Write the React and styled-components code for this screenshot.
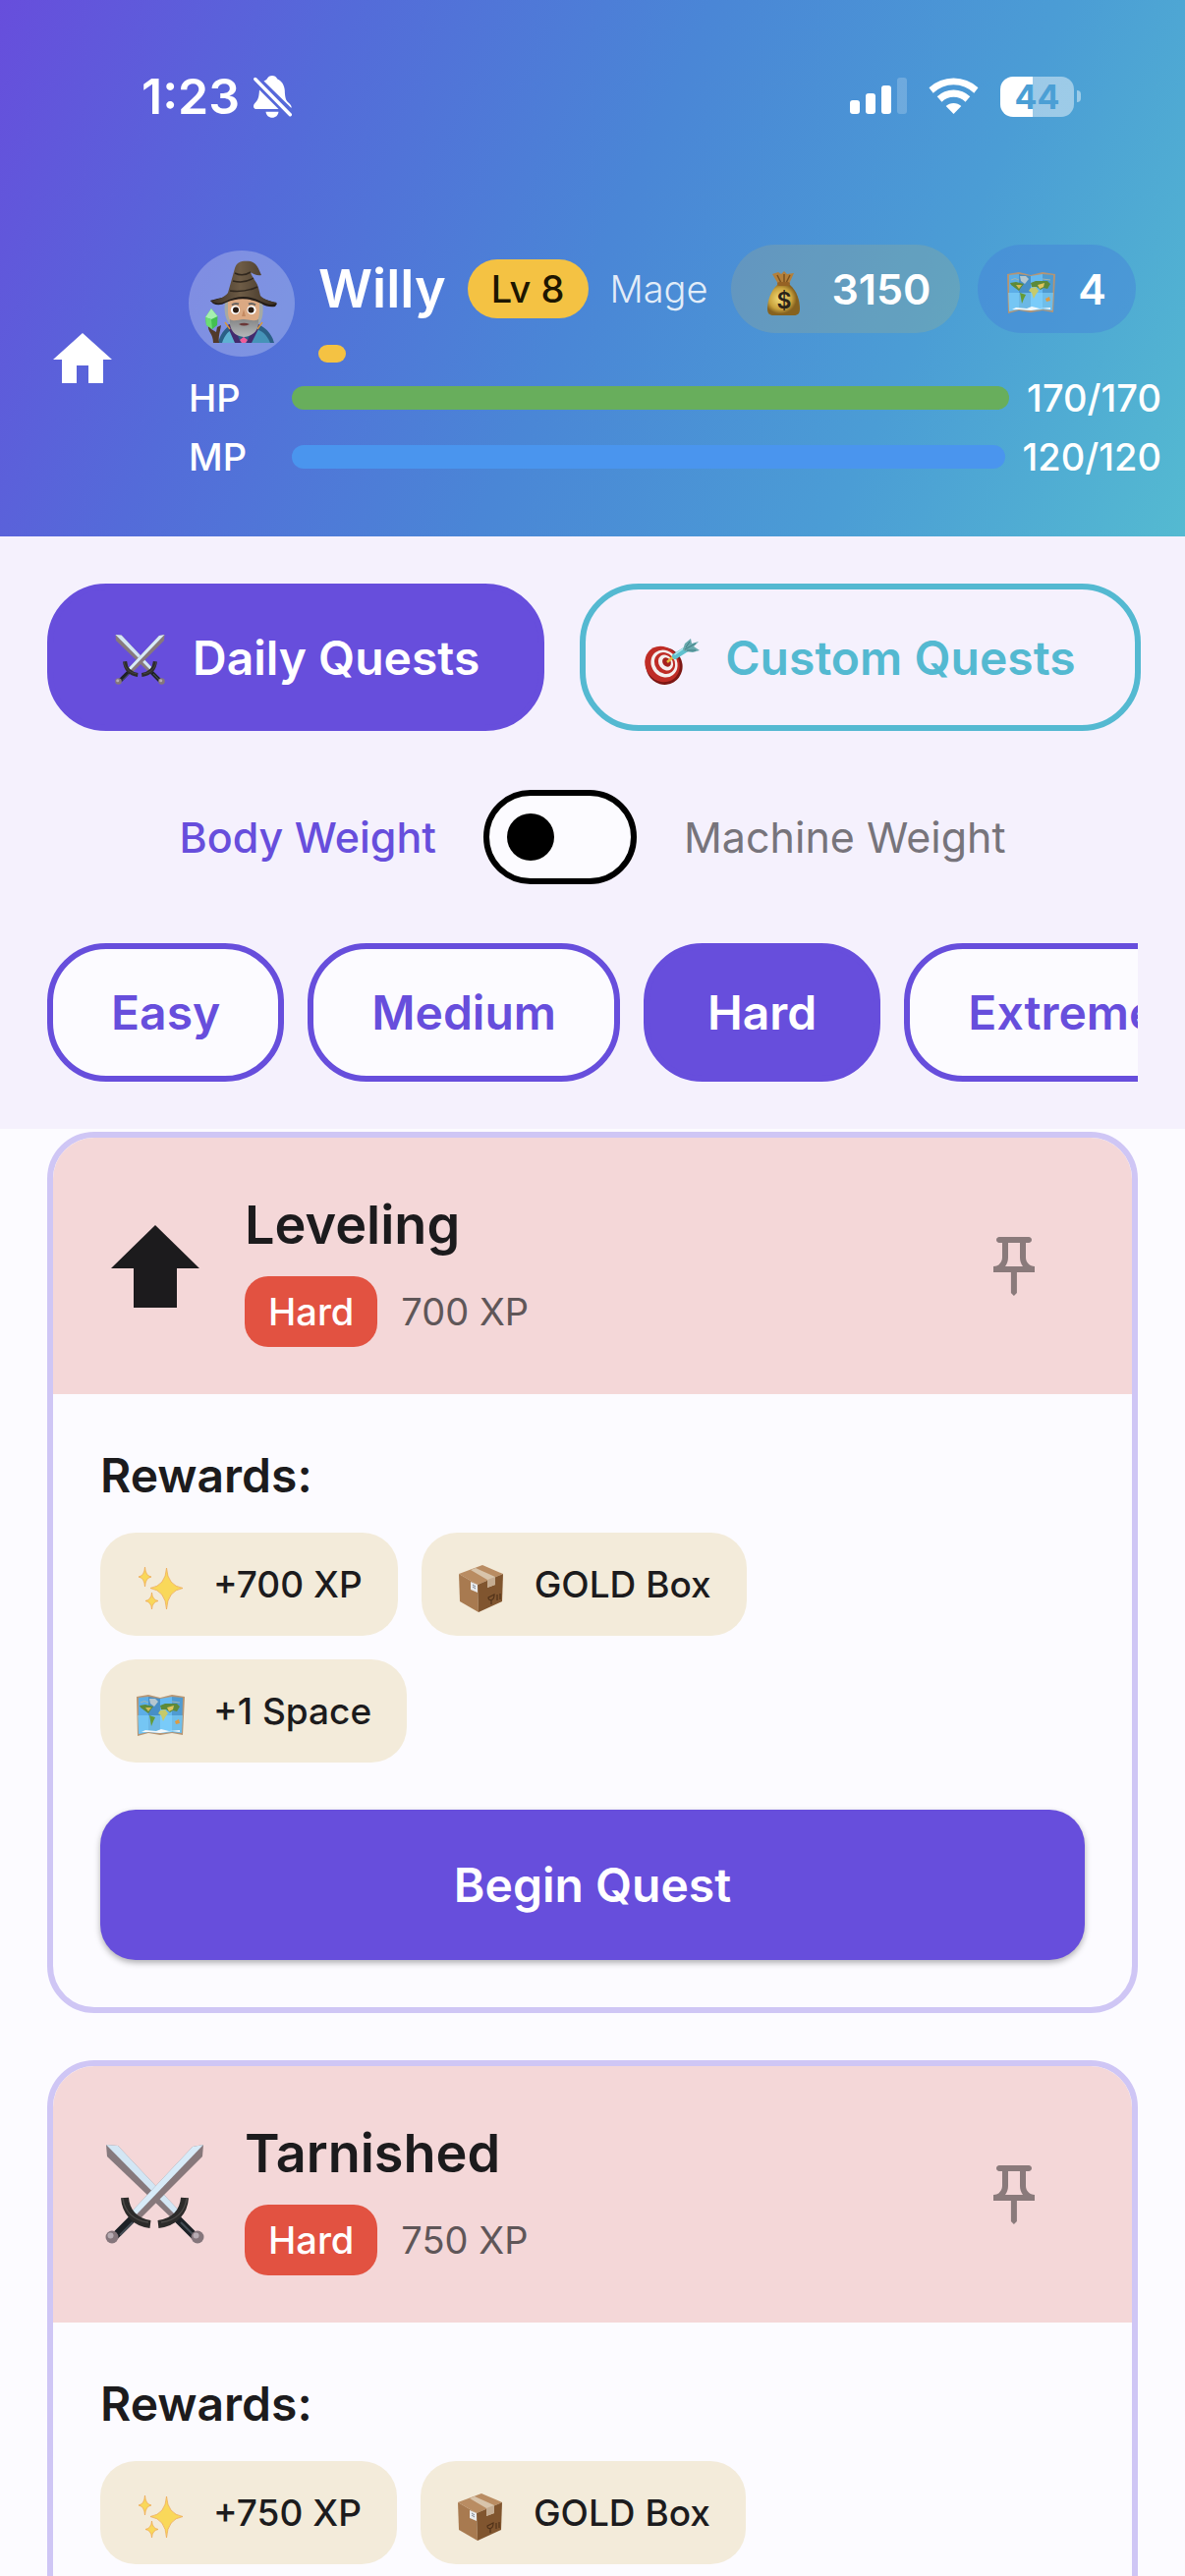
import React, {useState} from 'react';
import styled, {createGlobalStyle, css} from 'styled-components';

const primary = '#674edc';
const secondary = '#54b9d1';
const gold = '#f4c243';
const surface = '#fcfbff';
const textColor = '#1c1b1d';

const textSm = 38;
const textMd = 43;
const textLg = 48;
const textXl = 54;

const GlobalStyle = createGlobalStyle`
  * {
    box-sizing: border-box;
  }

  body {
    margin: 0;
    font-family: Inter, "Liberation Sans", sans-serif;
    color: ${textColor};
    background: ${surface};
  }

  button {
    font-family: inherit;
    cursor: pointer;
  }

  svg {
    display: block;
    flex: none;
  }
`;

const Screen = styled.div`
  display: flex;
  flex-direction: column;
  height: 100vh;
  overflow: hidden;
`;

/* Header */

const Header = styled.header`
  flex: none;
  padding-bottom: 57px;
  color: #fff;
  background: linear-gradient(114.4deg, #674edc 0%, #546bd9 25%, #4a86d6 50%, #4b9dd5 75%, #54bad1 100%);
`;

const StatusBar = styled.div`
  display: flex;
  align-items: center;
  height: 196px;
  padding: 0 106px 0 144px;
`;

const Clock = styled.time`
  font-size: 50px;
  line-height: 60px;
  font-weight: 600;
  margin-right: 14px;
`;

const StatusIcons = styled.div`
  display: flex;
  align-items: center;
  gap: 22px;
  margin-left: auto;
`;

const Battery = styled.div`
  display: flex;
  align-items: center;
  gap: 3px;

  &::after {
    content: '';
    width: 4px;
    height: 12px;
    border-radius: 0 6px 6px 0;
    background: rgba(255, 255, 255, 0.45);
  }
`;

const BatteryLevel = styled.div`
  width: 75px;
  border-radius: 13px;
  font-size: 34px;
  line-height: 41px;
  font-weight: 700;
  text-align: center;
  color: #4b9fd5;
  background: linear-gradient(90deg, #fff 44%, rgba(255, 255, 255, 0.45) 44%);
`;

const HeaderBody = styled.div`
  display: flex;
  align-items: center;
  gap: 36px;
  padding: 53px 24px 0 12px;
`;

const IconButton = styled.button`
  display: flex;
  align-items: center;
  justify-content: center;
  flex: none;
  width: 144px;
  height: 144px;
  padding: 0;
  border: 0;
  color: ${props => props.$color};
  background: none;
`;

const Stats = styled.div`
  display: flex;
  flex-direction: column;
  gap: 12px;
  flex: 1;
  min-width: 0;
`;

const Profile = styled.div`
  display: flex;
  align-items: center;
  gap: 24px;
`;

const Avatar = styled.div`
  display: flex;
  justify-content: center;
  flex: none;
  width: 108px;
  height: 108px;
  padding-top: 10px;
  border-radius: 50%;
  background: rgba(255, 255, 255, 0.25);
`;

const ProfileInfo = styled.div`
  flex: 1;
`;

const NameRow = styled.div`
  display: flex;
  align-items: center;
  gap: 22px;
  margin-bottom: 12px;
  padding-right: 26px;
  white-space: nowrap;
`;

const Name = styled.h1`
  margin: 0;
  font-size: ${textXl}px;
  line-height: 72px;
  font-weight: 600;
`;

const LevelBadge = styled.span`
  padding: 0 24px;
  border-radius: 30px;
  font-size: ${textSm}px;
  line-height: 60px;
  font-weight: 500;
  color: #1d1600;
  background: ${gold};
`;

const ClassName = styled.span`
  font-size: ${textSm}px;
  font-weight: 300;
  color: rgba(255, 255, 255, 0.85);
`;

const Currencies = styled.div`
  display: flex;
  gap: 18px;
  margin-left: auto;
`;

const IconSlot = styled.span`
  display: flex;
  align-items: center;
  justify-content: center;
  flex: none;
  width: ${props => props.$size}px;
  height: ${props => props.$size}px;
  padding-top: ${props => props.$drop || 0}px;
`;

const Currency = styled.span`
  display: flex;
  align-items: center;
  gap: 24px;
  height: 90px;
  padding: 0 30px;
  border-radius: 45px;
  font-size: ${textMd}px;
  font-weight: 600;
  background: ${props => props.$background};
`;

const XpBar = styled.div`
  height: 18px;
`;

const BarFill = styled.div`
  height: 100%;
  border-radius: 12px;
  background: ${props => props.$color};
`;

const StatRow = styled.div`
  display: flex;
  align-items: center;
  gap: 18px;
  font-size: ${textSm}px;
  line-height: 48px;
  font-weight: 500;
`;

const StatLabel = styled.span`
  width: 87px;
`;

const StatTrack = styled.div`
  flex: 1;
  height: 24px;
`;

/* Filters */

const Filters = styled.section`
  display: flex;
  flex-direction: column;
  gap: 60px;
  flex: none;
  padding: 48px;
  background: #f5f1fd;
`;

const TabRow = styled.div`
  display: flex;
  gap: 36px;
`;

const pill = css`
  display: flex;
  align-items: center;
  flex: none;
  border: 6px solid ${props => props.$color};
  border-radius: 60px;
  font-size: ${textLg}px;
  line-height: 57px;
  font-weight: 600;
  white-space: nowrap;
  color: ${props => (props.$active ? '#fff' : props.$color)};
`;

const Tab = styled.button`
  ${pill}
  gap: 26px;
  padding: 36px 60px;
  background: ${props => (props.$active ? props.$color : 'transparent')};
`;

const TabIcon = styled(IconSlot)`
  height: 66px;
`;

const Chip = styled.button`
  ${pill}
  padding: 36px 59px;
  background: ${props => (props.$active ? props.$color : surface)};
`;

const ChipRow = styled.div`
  display: flex;
  gap: 24px;
  overflow: hidden;
`;

const ModeRow = styled.div`
  display: flex;
  align-items: center;
  justify-content: center;
  gap: 48px;
`;

const ModeLabel = styled.label`
  font-size: ${textMd}px;
  line-height: 60px;
  font-weight: ${props => (props.$active ? 500 : 400)};
  color: ${props => (props.$active ? primary : '#77747b')};
`;

const Switch = styled.input`
  appearance: none;
  display: flex;
  align-items: center;
  justify-content: ${props => (props.checked ? 'flex-end' : 'flex-start')};
  width: 156px;
  height: 96px;
  margin: 0;
  padding: 0 18px;
  border: 6px solid #000;
  border-radius: 48px;
  background: ${surface};
  cursor: pointer;

  &::before {
    content: '';
    width: 48px;
    height: 48px;
    border-radius: 50%;
    background: #000;
  }
`;

/* Quests */

const QuestList = styled.main`
  display: flex;
  flex-direction: column;
  gap: 48px;
  flex: 1;
  min-height: 0;
  padding: 3px 48px 0;
`;

const Card = styled.article`
  flex: none;
  border: 6px solid #cfc6f5;
  border-radius: 48px;
  overflow: hidden;
`;

const CardHeader = styled.div`
  display: flex;
  align-items: center;
  gap: 36px;
  padding: 48px;
  background: #f4d7d8;
`;

const CardInfo = styled.div`
  flex: 1;
`;

const CardTitle = styled.h2`
  margin: 0 0 12px;
  font-size: ${textXl}px;
  line-height: 81px;
  font-weight: 600;
`;

const CardMeta = styled.div`
  display: flex;
  align-items: center;
  gap: 24px;
  font-size: ${textSm}px;
  line-height: 72px;
  color: #5f5658;
`;

const Difficulty = styled.span`
  padding: 0 24px;
  border-radius: 24px;
  font-weight: 500;
  color: #fff;
  background: #e25241;
`;

const CardBody = styled.div`
  padding: 48px;
`;

const RewardsTitle = styled.h3`
  margin: 0 0 24px;
  font-size: ${textLg}px;
  line-height: 69px;
  font-weight: 600;
`;

const Rewards = styled.ul`
  display: flex;
  flex-wrap: wrap;
  gap: 24px;
  max-width: 720px;
  margin: 0 0 48px;
  padding: 0;
  list-style: none;
`;

const Reward = styled.li`
  display: flex;
  align-items: center;
  gap: 29px;
  height: 105px;
  padding: 0 36px;
  border-radius: 36px;
  font-size: 37px;
  font-weight: 500;
  background: #f3ebda;
`;

const BeginButton = styled.button`
  width: 100%;
  padding: 48px;
  border: 0;
  border-radius: 36px;
  font-size: ${textLg}px;
  line-height: 57px;
  font-weight: 600;
  color: #fff;
  background: ${primary};
  box-shadow: 0 3px 6px rgba(0, 0, 0, 0.3);
`;

/* Icons */

const BellOffIcon = () => (
  <svg width="39" height="43" viewBox="0 0 39 43" fill="#fff">
    <path d="M10.5 5.5C12 4.6 13 4.2 13.6 3.4C14.8 1.2 16.7 0 19 0S23.200 1.200 24.400 3.400C28.500 5 31.500 9.500 31.800 15C32 21 32.500 24.500 35 27C37.500 29.200 39 30.500 38.500 33Z" />
    <path d="M6 14.500L25.500 34H2.500C-.6 34-.6 30 1.400 28C4.800 24.800 5.500 22 6 14.500Z" />
    <path d="M12.500 36.800H25.500C25 40.500 22.500 42.800 19 42.800S13 40.500 12.500 36.800Z" />
    <path d="M1.800 3.500L37.300 39.800" stroke="#fff" strokeWidth="3.400" strokeLinecap="round" />
  </svg>
);

const SignalIcon = () => (
  <svg width="58" height="38" viewBox="0 0 58 38" fill="#fff">
    <rect x="0" y="23" width="10" height="14" rx="3" />
    <rect x="16" y="16" width="10" height="21" rx="3" />
    <rect x="32" y="8" width="10" height="29" rx="3" />
    <rect x="48" y="0" width="10" height="37" rx="3" opacity="0.2" />
  </svg>
);

const WifiIcon = () => (
  <svg width="51" height="38" viewBox="0 0 51 38" fill="#fff">
    <path d="M0.500 10.300A37 37 0 0 1 50.500 10.300L46.300 15.700A29.800 29.800 0 0 0 4.700 15.700Z" />
    <path d="M8.700 19.300A24.400 24.400 0 0 1 42.300 19.300L37.500 24.700A17 17 0 0 0 13.500 24.700Z" />
    <path d="M17.700 29A11.300 11.300 0 0 1 33.300 29L25.500 37Z" />
  </svg>
);

const HomeIcon = () => (
  <svg width="72" height="72" viewBox="0 0 24 24" fill="currentColor">
    <path d="M10 19v-6h4v6h5v-8h3L12 2 2 11h3v8z" />
  </svg>
);

const PinIcon = () => (
  <svg width="72" height="72" viewBox="0 0 24 24" fill="currentColor">
    <path d="M14 4v5c0 1.120.37 2.160 1 3H9c.65-.86 1-1.900 1-3V4h4m3-2H7c-.55 0-1 .45-1 1s.45 1 1 1h1v5c0 1.660-1.340 3-3 3v2h5.970v7l1 1 1-1v-7H19v-2c-1.660 0-3-1.340-3-3V4h1c.55 0 1-.45 1-1s-.45-1-1-1z" />
  </svg>
);

const ArrowUpIcon = () => (
  <svg width="90" height="84" viewBox="0 0 90 84" fill={textColor}>
    <path d="M45 0L90 44H67V84H23V44H0Z" />
  </svg>
);

const WizardIcon = () => (
  <svg width="74" height="84" viewBox="0 0 74 84">
    <defs>
      <linearGradient id="hat" x1="0" x2="1">
        <stop offset="0" stopColor="#3b3025" />
        <stop offset="0.45" stopColor="#6e5c46" />
        <stop offset="1" stopColor="#382d23" />
      </linearGradient>
      <linearGradient id="beard" x1="0" x2="0" y1="0" y2="1">
        <stop offset="0" stopColor="#858788" />
        <stop offset="1" stopColor="#b4b7b8" />
      </linearGradient>
    </defs>
    <path d="M13 84C16 72 22 67 30 64H50C60 67 67 73 70 84Z" fill="#2b5f86" />
    <path d="M17 84C20 75 24 71 30 70L34 84Z" fill="#5fb1d2" />
    <path d="M66 84C62 75 58 71 49 70L45 84Z" fill="#4593b8" />
    <path d="M22 66L30 84H36L28 64ZM56 66L47 84H42L50 64Z" fill="#432a6d" />
    <path d="M20 63L25 70M58 63L53 70" stroke="#d6993b" strokeWidth="1.500" />
    <path d="M21 38C18 50 20 60 25 65H54C59 60 60 50 57 38Z" fill="#a5a9a4" />
    <path d="M23 38V54C24 64 31 70 39 70S54 64 55 54V38Z" fill="#dba983" />
    <path d="M25 60C30 63 33 60 39 60S48 63 54 60C55 69 51 77 39 78C28 77 24 69 25 60Z" fill="url(#beard)" />
    <path d="M34 65Q39 62.500 45 65Q39 68 34 65Z" fill="#6a3838" />
    <path d="M27 45.500Q30 43 34 44.500M44 44.500Q48 43 51 45.500" stroke="#686462" strokeWidth="2" fill="none" />
    <circle cx="30.500" cy="50.500" r="4.600" fill="#fff" />
    <circle cx="47" cy="50.500" r="4.600" fill="#fff" />
    <circle cx="31" cy="50.500" r="3" fill="#2c1c12" />
    <circle cx="46.500" cy="50.500" r="3" fill="#2c1c12" />
    <path d="M39 50L37 57H41Z" fill="#c48a62" />
    <path d="M5 41Q38 30 73 44L71 47Q63 48 57 44Q39 35 21 43Q14 47 8 44Z" fill="#231c17" />
    <path d="M5 41C14 40 20 37 23 33L30 8C32 1 38 0 46 1C53 3 54 9 57 15C53 16 49 14 46 12C48 19 53 22 54 28L56 36C60 40 67 42 73 43C68 47 62 44 57 42Q39 32 20 42Q12 46 5 41Z" fill="url(#hat)" />
    <path d="M30 13Q38 17 46 12M28 21Q40 24 49 18M25 31Q40 33 53 27" stroke="#30271e" strokeWidth="1.500" fill="none" />
    <path d="M3 66C2 73 8 74 8 84H14C13 77 15 73 16 66L12 68L11 73L6 70Z" fill="#513a2b" />
    <path d="M6 49L12.500 57L12 66L7 70L1 66L0 58Z" fill="#43bf51" />
    <path d="M6 49L12.500 57L6 60L0 58Z" fill="#a5efb0" />
    <path d="M6 60L7 70L1 66L0 58Z" fill="#6bdc74" />
    <path d="M39 78L43 81L41 84H37L35 81Z" fill="#ef5c9c" />
  </svg>
);

const MoneyBagIcon = () => (
  <svg width="34" height="45" viewBox="0 0 34 45">
    <defs>
      <radialGradient id="bag" cx="0.4" cy="0.45">
        <stop offset="0" stopColor="#f5df7c" />
        <stop offset="0.7" stopColor="#c9a23c" />
        <stop offset="1" stopColor="#86621f" />
      </radialGradient>
    </defs>
    <path d="M11 13L5 3L11 1L14 3L17 0L20 3L27 2L22 13Z" fill="#b5803a" />
    <path d="M10 4L14 12M17 3V12M23 4L19 12" stroke="#79501e" strokeWidth="1.500" />
    <path d="M10 14H23C30 20 33 30 33 38C33 43 31 45 27 45H6C2 45 0 43 0 38C0 30 4 19 10 14Z" fill="url(#bag)" />
    <rect x="10" y="11" width="13" height="4" rx="2" fill="#966224" />
    <text x="17" y="38" textAnchor="middle" fontSize="23" fontWeight="600" fill="#29231a">$</text>
  </svg>
);

const MapIcon = () => (
  <svg width="49" height="42" viewBox="0 0 49 42">
    <path d="M0 2L12 0L24 3L36 0L49 2L47 41L36 39L24 41L12 39L1 42Z" fill="#b69573" />
    <path d="M2 3L12 2V38L2 40Z" fill="#5caee7" />
    <path d="M12 2L24 4V39L12 38Z" fill="#478fc6" />
    <path d="M24 4L36 2V38L24 39Z" fill="#65b9f1" />
    <path d="M36 2L47 3L46 39L36 38Z" fill="#4f9bd1" />
    <path d="M1 21H47L46 39L36 38L24 39L12 38L2 40Z" fill="#8bdbff" opacity="0.55" />
    <path d="M13 4L19 4L22 7L18 12L14 9Z" fill="#b4c7cf" />
    <path d="M3 11L9 10L17 12L14 16L12 19L8 16L4 13Z" fill="#5d8a3a" />
    <path d="M9 13L15 13L12 17Z" fill="#d3bb55" />
    <path d="M13 21L19 23L17 27L15 32L14 26Z" fill="#659b35" />
    <path d="M24 11L29 9L41 9L44 12L41 17L37 16L34 18L30 15L25 15Z" fill="#5d8a3a" />
    <path d="M24 16L29 15L32 19L29 23L27 27L25 21L22 19Z" fill="#c5ca6b" />
    <path d="M31 13L38 11L37 15L33 17Z" fill="#e1c55e" />
    <path d="M39 27L43 25L44 29L40 30Z" fill="#dc9b42" />
    <path d="M5 38L9 36L20 37L25 35L33 37L44 36L44 38L36 37L24 39L12 38Z" fill="#f1f7fa" />
    <path d="M4 8Q8 5 12 8M36 7L44 8" stroke="#a3b5b0" fill="none" />
  </svg>
);

const SwordsIcon = ({size}) => (
  <svg width={size} height={size} viewBox="0 0 101 101">
    <path d="M1 0L13 1L76 68L69 76L2 12Z" fill="#86797d" />
    <path d="M1 0L13 1L76 68L72 72Z" fill="#d3e6f4" />
    <path d="M100 0L89 2L27 68L35 76L99 12Z" fill="#87787b" />
    <path d="M100 0L89 2L27 68L31 72Z" fill="#d8ebf8" />
    <path d="M27 76L10 93M74 76L91 93" stroke="#1d2126" strokeWidth="8" />
    <path d="M28 79L15 92M77 79L90 92" stroke="#454d55" strokeWidth="2" />
    <path d="M20 54C21 68 30 79 46 81M81 54C80 68 71 79 54 81" stroke="#2c2b2a" strokeWidth="8" fill="none" />
    <path d="M18 55C20 67 28 77 44 79M83 55C81 67 73 77 57 79" stroke="#4c4a48" strokeWidth="1.500" fill="none" />
    <circle cx="7" cy="94" r="6.500" fill="#85767c" />
    <circle cx="94" cy="94" r="6.500" fill="#85767c" />
    <circle cx="5.500" cy="92.500" r="3" fill="#b8adb4" />
    <circle cx="92.500" cy="92.500" r="3" fill="#b8adb4" />
  </svg>
);

const TargetIcon = () => (
  <svg width="56" height="47" viewBox="0 0 56 47">
    <ellipse cx="20" cy="28" rx="18.500" ry="19" fill="#7c1714" transform="rotate(-30 20 28)" />
    <ellipse cx="18" cy="26" rx="17" ry="19" fill="#bf2c26" transform="rotate(-38 18 26)" />
    <ellipse cx="20" cy="25.500" rx="13" ry="14.500" fill="#f5efee" transform="rotate(-38 20 25.500)" />
    <ellipse cx="20.500" cy="25" rx="10" ry="11.500" fill="#bf2c26" transform="rotate(-38 20.500 25)" />
    <ellipse cx="21.500" cy="24.500" rx="7" ry="8.500" fill="#f5efee" transform="rotate(-38 21.500 24.500)" />
    <ellipse cx="22.500" cy="24" rx="4" ry="5" fill="#a7211c" transform="rotate(-38 22.500 24)" />
    <path d="M23 24L31 17" stroke="#e6b93d" strokeWidth="2.500" />
    <path d="M31 18L42 11" stroke="#5fc1ce" strokeWidth="6" strokeLinecap="round" />
    <path d="M31 16L41 9" stroke="#b7e9ee" strokeWidth="1.500" strokeLinecap="round" />
    <path d="M39 11L41 5L47 0L48 5L55 3L50 8L56 12L49 14L41 13Z" fill="#69a9ad" />
    <path d="M41 11L52 5M42 9L46 3M43 12L52 12" stroke="#417f85" strokeWidth="1" />
  </svg>
);

const SparklesIcon = () => (
  <svg width="45" height="44" viewBox="0 0 45 44" fill="#f9d85a" stroke="#efab55" strokeWidth="0.800">
    <path d="M28.500 1Q29.500 19 45 21.500Q29.500 24 28.500 43Q27.500 24 12 21.500Q27.500 19 28.500 1Z" />
    <path d="M6.500 0Q7 9 13 10Q7 11 6.500 20Q6 11 0 10Q6 9 6.500 0Z" />
    <path d="M13.500 26Q14 33.500 20 34.500Q14 35.500 13.500 43Q13 35.500 7 34.500Q13 33.500 13.500 26Z" />
  </svg>
);

const BoxIcon = () => (
  <svg width="45" height="48" viewBox="0 0 45 48">
    <path d="M24 0L45 9L19 20L0 9Z" fill="#b98c62" />
    <path d="M0 9L19 20L20 48L1 37Z" fill="#a87a50" />
    <path d="M19 20L45 9L44 37L20 48Z" fill="#80552f" />
    <path d="M12 5L17 3L37 12V20L29 23V15Z" fill="#d8c4ab" />
    <path d="M29 15L37 12V20L29 23Z" fill="#c4ac92" />
    <path d="M12 17L19 20V28L12 25Z" fill="#e9eaec" />
    <path d="M14 20L17 22M14 22L17 24" stroke="#7f8794" />
    <path d="M30 33L36 30Q36 35 33 35.500Q30 36 30 33ZM33 35V40M39 30V36M42 29V35" stroke="#503219" strokeWidth="1.200" fill="none" />
  </svg>
);

const DIFFICULTIES = ['Easy', 'Medium', 'Hard', 'Extreme'];

const QUESTS = [
  {id: 1, title: 'Leveling', difficulty: 'Hard', xp: 700, icon: <ArrowUpIcon />},
  {id: 2, title: 'Tarnished', difficulty: 'Hard', xp: 750, icon: <SwordsIcon size={101} />},
];

const Stat = ({label, value, max, color}) => (
  <StatRow>
    <StatLabel>{label}</StatLabel>
    <StatTrack>
      <BarFill $color={color} style={{width: `${(value / max) * 100}%`}} />
    </StatTrack>
    <span>{value}/{max}</span>
  </StatRow>
);

const PlayerHeader = () => (
  <Header>
    <StatusBar>
      <Clock>1:23</Clock>
      <BellOffIcon />
      <StatusIcons>
        <SignalIcon />
        <WifiIcon />
        <Battery><BatteryLevel>44</BatteryLevel></Battery>
      </StatusIcons>
    </StatusBar>
    <HeaderBody>
      <IconButton $color="#fff" aria-label="Home"><HomeIcon /></IconButton>
      <Stats>
        <Profile>
          <Avatar><WizardIcon /></Avatar>
          <ProfileInfo>
            <NameRow>
              <Name>Willy</Name>
              <LevelBadge>Lv 8</LevelBadge>
              <ClassName>Mage</ClassName>
              <Currencies>
                <Currency $background="rgba(244, 194, 67, 0.15)">
                  <IconSlot $size={48} $drop={8}><MoneyBagIcon /></IconSlot>
                  3150
                </Currency>
                <Currency $background="rgba(68, 128, 218, 0.45)">
                  <IconSlot $size={48} $drop={8}><MapIcon /></IconSlot>
                  4
                </Currency>
              </Currencies>
            </NameRow>
            <XpBar>
              <BarFill $color={gold} style={{width: `${(33 / 1000) * 100}%`}} />
            </XpBar>
          </ProfileInfo>
        </Profile>
        <Stat label="HP" value={170} max={170} color="#68ae5c" />
        <Stat label="MP" value={120} max={120} color="#4a95ee" />
      </Stats>
    </HeaderBody>
  </Header>
);

const QuestCard = ({quest}) => (
  <Card>
    <CardHeader>
      <IconSlot $size={111}>{quest.icon}</IconSlot>
      <CardInfo>
        <CardTitle>{quest.title}</CardTitle>
        <CardMeta>
          <Difficulty>{quest.difficulty}</Difficulty>
          <span>{quest.xp} XP</span>
        </CardMeta>
      </CardInfo>
      <IconButton $color="#8a7a7b" aria-label={`Pin ${quest.title}`}><PinIcon /></IconButton>
    </CardHeader>
    <CardBody>
      <RewardsTitle>Rewards:</RewardsTitle>
      <Rewards>
        <Reward><IconSlot $size={50} $drop={8}><SparklesIcon /></IconSlot>+{quest.xp} XP</Reward>
        <Reward><IconSlot $size={50} $drop={8}><BoxIcon /></IconSlot>GOLD Box</Reward>
        <Reward><IconSlot $size={50} $drop={8}><MapIcon /></IconSlot>+1 Space</Reward>
      </Rewards>
      <BeginButton>Begin Quest</BeginButton>
    </CardBody>
  </Card>
);

const App = () => {
  const [tab, setTab] = useState('daily');
  const [machine, setMachine] = useState(false);
  const [difficulty, setDifficulty] = useState('Hard');

  return (
    <Screen>
      <GlobalStyle />
      <PlayerHeader />
      <Filters>
        <TabRow>
          <Tab $color={primary} $active={tab === 'daily'} onClick={() => setTab('daily')}>
            <TabIcon $size={56} $drop={4}><SwordsIcon size={51} /></TabIcon>
            Daily Quests
          </Tab>
          <Tab $color={secondary} $active={tab === 'custom'} onClick={() => setTab('custom')}>
            <TabIcon $size={56} $drop={8}><TargetIcon /></TabIcon>
            Custom Quests
          </Tab>
        </TabRow>
        <ModeRow>
          <ModeLabel htmlFor="weight-mode" $active={!machine}>Body Weight</ModeLabel>
          <Switch
            id="weight-mode"
            type="checkbox"
            role="switch"
            checked={machine}
            onChange={e => setMachine(e.target.checked)}
          />
          <ModeLabel htmlFor="weight-mode" $active={machine}>Machine Weight</ModeLabel>
        </ModeRow>
        <ChipRow>
          {DIFFICULTIES.map(name => (
            <Chip
              key={name}
              $color={primary}
              $active={name === difficulty}
              onClick={() => setDifficulty(name)}
            >
              {name}
            </Chip>
          ))}
        </ChipRow>
      </Filters>
      <QuestList>
        {QUESTS.map(quest => <QuestCard key={quest.id} quest={quest} />)}
      </QuestList>
    </Screen>
  );
};

export default App;
